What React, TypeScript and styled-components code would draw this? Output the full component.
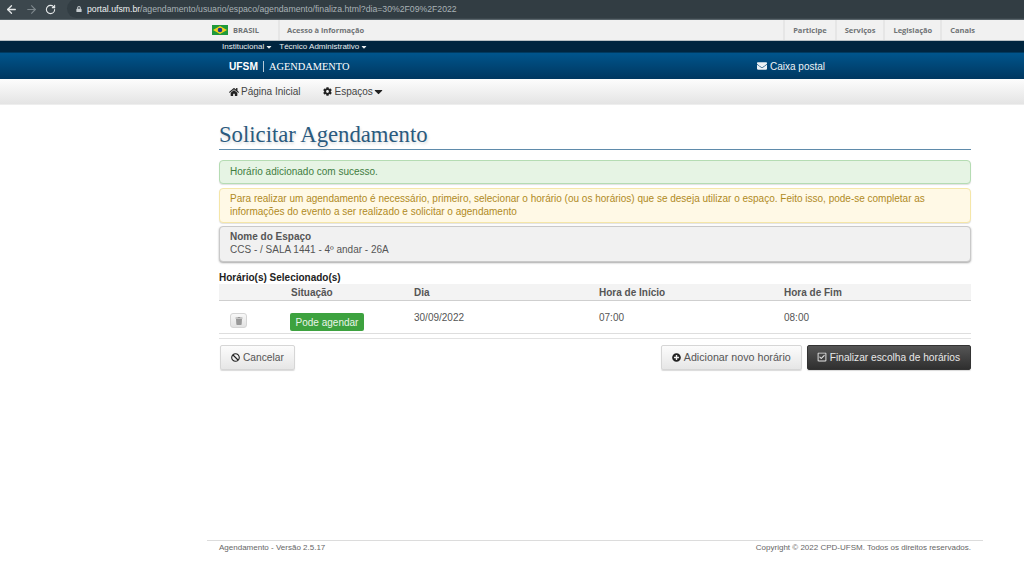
import styled, { createGlobalStyle } from "styled-components";
import { ArrowLeft, ArrowRight, RotateCw } from "lucide-react";
import {
  FaBan,
  FaCaretDown,
  FaCog,
  FaEnvelope,
  FaHome,
  FaLock,
  FaPlusCircle,
  FaRegCheckSquare,
  FaTrash,
} from "react-icons/fa";

const GlobalStyle = createGlobalStyle`
  html, body {
    margin: 0;
    padding: 0;
    background: #fff;
  }
  body {
    font-family: "Liberation Sans", Arial, sans-serif;
    font-size: 10px;
    color: #555;
  }
`;

const Page = styled.div`
  width: 1024px;
  height: 585px;
  overflow: hidden;
  display: flex;
  flex-direction: column;
`;

const BrowserBar = styled.div`
  height: 20px;
  box-sizing: border-box;
  background: #3c474d;
  border-bottom: 1px solid #59646a;
  display: flex;
  align-items: center;
  padding-left: 5px;
  gap: 7px;
  color: #dfe3e5;
`;

const NavIcon = styled.span<{ $dim?: boolean }>`
  display: flex;
  color: ${({ $dim }) => ($dim ? "#7d878c" : "#e6e9ea")};
`;

const AddressBar = styled.div`
  margin-left: 4px;
  flex: 1;
  height: 19px;
  margin-top: -2px;
  padding-left: 9px;
  background: #323d43;
  border-radius: 10px 0 0 10px;
  display: flex;
  align-items: center;
  gap: 5px;
  font-size: 8.7px;
  color: #a9b2b6;
  white-space: nowrap;
`;

const Host = styled.span`
  color: #eef0f1;
`;

const Wrap = styled.div`
  width: 776px;
  margin: 0 0 0 207px;
  box-sizing: border-box;
`;

const GovBar = styled.div`
  height: 21px;
  box-sizing: border-box;
  background: #f1f1f1;
  border-bottom: 1px solid #b9c0c4;
`;

const GovRow = styled(Wrap)`
  height: 100%;
  display: flex;
  align-items: stretch;
  padding: 0 0 0 5px;
  font-family: "Open Sans", sans-serif;
  font-size: 7.5px;
  font-weight: 700;
  color: #6f7375;
`;

const GovBrand = styled.div`
  width: 66px;
  display: flex;
  align-items: center;
  gap: 5px;
  border-right: 2px solid #e6e6e6;
`;

const GovLink = styled.div`
  display: flex;
  align-items: center;
  padding: 0 7px;
`;

const GovSpacer = styled.div`
  flex: 1;
`;

const GovItem = styled.div`
  display: flex;
  align-items: center;
  padding: 0 8px 0 8px;
  border-left: 2px solid #e6e6e6;
`;

const SystemBar = styled.div`
  height: 12px;
  background: #00253f;
  border-bottom: 1px solid #003a60;
  box-sizing: border-box;
`;

const SystemRow = styled(Wrap)`
  display: flex;
  align-items: center;
  height: 100%;
  padding-left: 15px;
  gap: 6px;
  color: #e8edf0;
  font-size: 8px;
`;

const SystemItem = styled.span`
  display: flex;
  align-items: center;
  gap: 1px;
`;

const Banner = styled.div`
  height: 26px;
  background: linear-gradient(#00558c, #003760);
`;

const BannerRow = styled(Wrap)`
  height: 100%;
  display: flex;
  align-items: center;
  padding-left: 22px;
  color: #fff;
`;

const Brand = styled.div`
  flex: 0 0 528px;
  display: flex;
  align-items: center;
  font-family: "Liberation Serif", serif;
  font-size: 10.4px;
`;

const BrandStrong = styled.strong`
  font-family: "Liberation Sans", sans-serif;
  font-size: 10.2px;
  padding-right: 5px;
  margin-right: 5px;
  border-right: 1px solid #b8cad8;
  line-height: 11px;
`;

const MailLink = styled.div`
  display: flex;
  align-items: center;
  gap: 3px;
  font-size: 10px;
  color: #eef3f6;
`;

const MenuBar = styled.div`
  height: 26px;
  box-sizing: border-box;
  background: linear-gradient(#fdfdfd, #e4e4e4);
  border-bottom: 1px solid #eeeeee;
`;

const MenuRow = styled(Wrap)`
  height: 100%;
  display: flex;
  align-items: center;
  padding-left: 22px;
  gap: 23px;
  font-size: 10px;
`;

const MenuItem = styled.span`
  display: flex;
  align-items: center;
  gap: 2px;
  color: #444;

  svg {
    color: #222;
  }
`;

const MenuCaret = styled(FaCaretDown)`
  margin-left: -3px;
`;

const Content = styled(Wrap)`
  flex: 1;
  padding: 0 12px;
  display: flex;
  flex-direction: column;
`;

const Title = styled.h1`
  margin: 17px 0 0;
  height: 27px;
  font-family: "Liberation Serif", serif;
  font-size: 22.7px;
  font-weight: 400;
  line-height: 25px;
  color: #2a5a7e;
  text-shadow: 1px 2px 3px rgba(0, 0, 0, 0.15);
  border-bottom: 1px solid #5f8bab;
`;

const Alert = styled.div<{ $kind: "success" | "warning" | "info" }>`
  box-sizing: border-box;
  padding: 4px 10px;
  border-radius: 4px;
  font-size: 10px;
  line-height: 13px;
  border: 1px solid
    ${({ $kind }) =>
      $kind === "success" ? "#b5dcb3" : $kind === "warning" ? "#f5e6a8" : "#c9c9c9"};
  background: ${({ $kind }) =>
    $kind === "success" ? "#e6f4e4" : $kind === "warning" ? "#fff9e6" : "#f1f1f1"};
  color: ${({ $kind }) =>
    $kind === "success" ? "#3f7d3f" : $kind === "warning" ? "#b08a1e" : "#555"};
  box-shadow: ${({ $kind }) =>
    $kind === "info" ? "0 1px 2px rgba(0,0,0,0.35)" : "0 1px 1px rgba(0,0,0,0.12)"};
`;

const SuccessAlert = styled(Alert)`
  margin-top: 10px;
  height: 24px;
  line-height: 14px;
`;

const WarningAlert = styled(Alert)`
  margin-top: 4px;
  height: 35px;
  padding-top: 3px;
`;

const InfoAlert = styled(Alert)`
  margin-top: 3px;
  height: 36px;
  line-height: 12.5px;
`;

const SectionLabel = styled.div`
  margin-top: 10px;
  font-size: 10px;
  line-height: 12px;
  font-weight: 700;
  color: #222;
`;

const Table = styled.div`
  display: flex;
  flex-direction: column;
`;

const TableRow = styled.div`
  display: grid;
  grid-template-columns: 72px 123px 185px 185px 1fr;
`;

const HeadRow = styled(TableRow)`
  height: 16px;
  align-items: center;
  background: #f3f3f3;
  border-bottom: 1px solid #cfcfcf;
  font-weight: 700;
  font-size: 10px;
  color: #555;
`;

const BodyRow = styled(TableRow)`
  height: 33px;
  box-sizing: border-box;
  border-bottom: 1px solid #dedede;
  font-size: 10px;
  color: #555;
  padding-top: 11px;
`;

const TrashButton = styled.span`
  margin: 1px 0 0 11px;
  width: 17px;
  height: 15px;
  box-sizing: border-box;
  display: flex;
  align-items: center;
  justify-content: center;
  background: linear-gradient(#f8f8f8, #e2e2e2);
  border: 1px solid #d5d5d5;
  border-radius: 3px;
  color: #999;
`;

const StatusBadge = styled.span`
  margin: 1px 0 0 -1px;
  width: 74px;
  height: 18px;
  display: flex;
  align-items: center;
  justify-content: center;
  border-radius: 2px;
  background: #3da23f;
  color: #e9f5e9;
  font-size: 10px;
`;

const ActionBar = styled.div`
  margin-top: 4px;
  padding: 6px 0 0 1px;
  border-top: 1px solid #e2e2e2;
  display: flex;
  align-items: center;
`;

const Button = styled.span<{ $dark?: boolean }>`
  height: 25px;
  box-sizing: border-box;
  padding: 0 10px 1px ${({ $dark }) => ($dark ? "9px" : "10px")};
  display: inline-flex;
  align-items: center;
  gap: 3px;
  font-size: 10.2px;
  border-radius: 2px;
  border: 1px solid ${({ $dark }) => ($dark ? "#333" : "#d6d6d6")};
  background: ${({ $dark }) =>
    $dark ? "linear-gradient(#555, #2f2f2f)" : "linear-gradient(#fcfcfc, #e6e6e6)"};
  color: ${({ $dark }) => ($dark ? "#e8e8e8" : "#555")};
  box-shadow: 0 1px 1px rgba(0, 0, 0, 0.15);

  svg {
    color: ${({ $dark }) => ($dark ? "#e8e8e8" : "#222")};
  }
`;

const ActionSpacer = styled.div`
  flex: 1;
`;

const AddButton = styled(Button)`
  margin-right: 5px;
  font-size: 10.7px;
`;

const Footer = styled(Wrap)`
  height: 45px;
  flex: none;
  border-top: 1px solid #dcdcdc;
  padding: 1px 12px 0;
  display: flex;
  justify-content: space-between;
  font-size: 8px;
  line-height: 12px;
  color: #666;
`;

const BrazilFlag = () => (
  <svg width="16" height="10" viewBox="0 0 16 10">
    <rect width="16" height="10" fill="#1f9a3c" />
    <polygon points="8,1 15,5 8,9 1,5" fill="#f2d11c" />
    <circle cx="8" cy="5" r="2.3" fill="#1c3f8f" />
  </svg>
);

const App = () => {
  return (
    <Page>
      <GlobalStyle />
      <BrowserBar>
        <NavIcon>
          <ArrowLeft size={13} strokeWidth={2.4} />
        </NavIcon>
        <NavIcon $dim>
          <ArrowRight size={13} strokeWidth={2} />
        </NavIcon>
        <NavIcon>
          <RotateCw size={11} strokeWidth={2.4} />
        </NavIcon>
        <AddressBar>
          <FaLock size={6} color="#c5cbce" />
          <span>
            <Host>portal.ufsm.br</Host>/agendamento/usuario/espaco/agendamento/finaliza.html?dia=30%2F09%2F2022
          </span>
        </AddressBar>
      </BrowserBar>

      <GovBar>
        <GovRow>
          <GovBrand>
            <BrazilFlag />
            BRASIL
          </GovBrand>
          <GovLink>Acesso à informação</GovLink>
          <GovSpacer />
          <GovItem>Participe</GovItem>
          <GovItem>Serviços</GovItem>
          <GovItem>Legislação</GovItem>
          <GovItem>Canais</GovItem>
        </GovRow>
      </GovBar>

      <SystemBar>
        <SystemRow>
          <SystemItem>
            Institucional <FaCaretDown size={8} />
          </SystemItem>
          <SystemItem>
            Técnico Administrativo <FaCaretDown size={8} />
          </SystemItem>
        </SystemRow>
      </SystemBar>

      <Banner>
        <BannerRow>
          <Brand>
            <BrandStrong>UFSM</BrandStrong>
            AGENDAMENTO
          </Brand>
          <MailLink>
            <FaEnvelope size={10} />
            Caixa postal
          </MailLink>
        </BannerRow>
      </Banner>

      <MenuBar>
        <MenuRow>
          <MenuItem>
            <FaHome size={10} />
            Página Inicial
          </MenuItem>
          <MenuItem>
            <FaCog size={9} />
            Espaços
            <MenuCaret size={13} />
          </MenuItem>
        </MenuRow>
      </MenuBar>

      <Content>
        <Title>Solicitar Agendamento</Title>
        <SuccessAlert $kind="success">Horário adicionado com sucesso.</SuccessAlert>
        <WarningAlert $kind="warning">
          Para realizar um agendamento é necessário, primeiro, selecionar o horário (ou os horários) que se deseja utilizar o espaço. Feito isso, pode-se completar as informações do evento a ser realizado e solicitar o agendamento
        </WarningAlert>
        <InfoAlert $kind="info">
          <strong>Nome do Espaço</strong>
          <br />
          CCS - / SALA 1441 - 4º andar - 26A
        </InfoAlert>

        <SectionLabel>Horário(s) Selecionado(s)</SectionLabel>
        <Table>
          <HeadRow>
            <span />
            <span>Situação</span>
            <span>Dia</span>
            <span>Hora de Início</span>
            <span>Hora de Fim</span>
          </HeadRow>
          <BodyRow>
            <span>
              <TrashButton>
                <FaTrash size={8} />
              </TrashButton>
            </span>
            <span>
              <StatusBadge>Pode agendar</StatusBadge>
            </span>
            <span>30/09/2022</span>
            <span>07:00</span>
            <span>08:00</span>
          </BodyRow>
        </Table>

        <ActionBar>
          <Button>
            <FaBan size={9} />
            Cancelar
          </Button>
          <ActionSpacer />
          <AddButton>
            <FaPlusCircle size={9} />
            Adicionar novo horário
          </AddButton>
          <Button $dark>
            <FaRegCheckSquare size={10} />
            Finalizar escolha de horários
          </Button>
        </ActionBar>
      </Content>

      <Footer>
        <span>Agendamento - Versão 2.5.17</span>
        <span>Copyright © 2022 CPD-UFSM. Todos os direitos reservados.</span>
      </Footer>
    </Page>
  );
};

export default App;
